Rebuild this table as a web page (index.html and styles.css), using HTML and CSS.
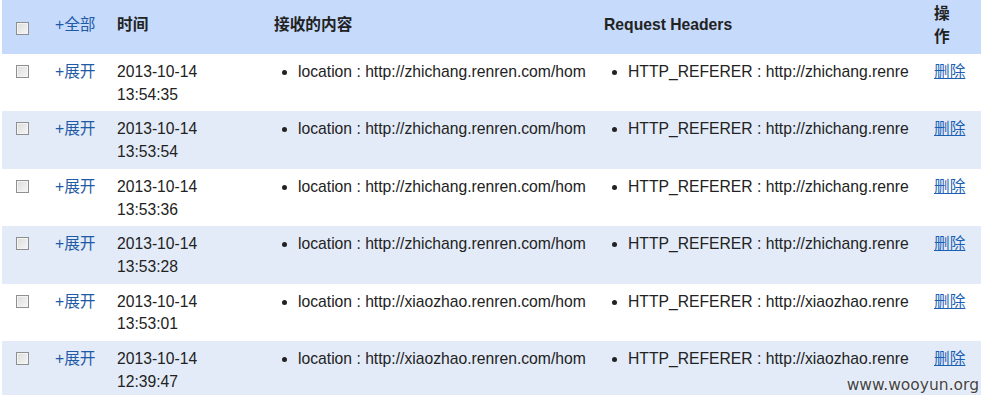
FILE: index.html
```html
<!DOCTYPE html>
<html lang="zh">
<head>
<meta charset="utf-8">
<title>接收的内容</title>
<link rel="stylesheet" href="styles.css">
</head>
<body>
<div class="wrap">
<table class="list">
  <colgroup>
    <col class="c-check"><col class="c-toggle"><col class="c-time"><col class="c-content"><col class="c-headers"><col class="c-op">
  </colgroup>
  <thead>
    <tr>
      <th><input type="checkbox" class="cb"></th>
      <th class="th-link"><a class="toggle">+全部</a></th>
      <th>时间</th>
      <th>接收的内容</th>
      <th>Request Headers</th>
      <th class="th-op">操作</th>
    </tr>
  </thead>
  <tbody>
    <tr>
      <td><input type="checkbox" class="cb"></td>
      <td><a class="toggle">+展开</a></td>
      <td>2013-10-14<br>13:54:35</td>
      <td><ul><li>location : http://zhichang.renren.com/hom</li></ul></td>
      <td><ul><li>HTTP_REFERER : http://zhichang.renre</li></ul></td>
      <td><a class="del" href="#">删除</a></td>
    </tr>
    <tr class="alt">
      <td><input type="checkbox" class="cb"></td>
      <td><a class="toggle">+展开</a></td>
      <td>2013-10-14<br>13:53:54</td>
      <td><ul><li>location : http://zhichang.renren.com/hom</li></ul></td>
      <td><ul><li>HTTP_REFERER : http://zhichang.renre</li></ul></td>
      <td><a class="del" href="#">删除</a></td>
    </tr>
    <tr>
      <td><input type="checkbox" class="cb"></td>
      <td><a class="toggle">+展开</a></td>
      <td>2013-10-14<br>13:53:36</td>
      <td><ul><li>location : http://zhichang.renren.com/hom</li></ul></td>
      <td><ul><li>HTTP_REFERER : http://zhichang.renre</li></ul></td>
      <td><a class="del" href="#">删除</a></td>
    </tr>
    <tr class="alt">
      <td><input type="checkbox" class="cb"></td>
      <td><a class="toggle">+展开</a></td>
      <td>2013-10-14<br>13:53:28</td>
      <td><ul><li>location : http://zhichang.renren.com/hom</li></ul></td>
      <td><ul><li>HTTP_REFERER : http://zhichang.renre</li></ul></td>
      <td><a class="del" href="#">删除</a></td>
    </tr>
    <tr>
      <td><input type="checkbox" class="cb"></td>
      <td><a class="toggle">+展开</a></td>
      <td>2013-10-14<br>13:53:01</td>
      <td><ul><li>location : http://xiaozhao.renren.com/hom</li></ul></td>
      <td><ul><li>HTTP_REFERER : http://xiaozhao.renre</li></ul></td>
      <td><a class="del" href="#">删除</a></td>
    </tr>
    <tr class="alt">
      <td><input type="checkbox" class="cb"></td>
      <td><a class="toggle">+展开</a></td>
      <td>2013-10-14<br>12:39:47</td>
      <td><ul><li>location : http://xiaozhao.renren.com/hom</li></ul></td>
      <td><ul><li>HTTP_REFERER : http://xiaozhao.renre</li></ul></td>
      <td><a class="del" href="#">删除</a></td>
    </tr>
  </tbody>
</table>
<div class="watermark">www.wooyun.org</div>
</div>
</body>
</html>
```
FILE: styles.css
```css
html, body {
  margin: 0;
  padding: 0;
  background: #ffffff;
}
body {
  font-family: Arial, "Liberation Sans", "Noto Sans CJK SC", sans-serif;
  font-size: 15.7px;
  color: #222222;
  overflow: hidden;
}
.wrap {
  position: relative;
  padding-left: 2px;
  width: 979px;
  height: 395px;
  overflow: hidden;
}
.list {
  table-layout: fixed;
  border-collapse: collapse;
  width: 979px;
}
.c-check { width: 46px; }
.c-toggle { width: 62px; }
.c-time { width: 157px; }
.c-content { width: 330px; }
.c-headers { width: 330px; }
.c-op { width: 54px; }

.list thead tr {
  background: #c6dafc;
  height: 54px;
}
.list th {
  padding: 0 0 5px 7px;
  text-align: left;
  vertical-align: middle;
  font-weight: bold;
  line-height: 23px;
  color: #222222;
}
.list th.th-link {
  font-weight: normal;
}
.list th.th-op {
  padding-right: 20px;
}
.list td {
  padding: 7px 0 5px 7px;
  vertical-align: top;
  line-height: 22.7px;
  white-space: nowrap;
  overflow: hidden;
}
.list tbody tr.alt {
  background: #e3ebf8;
}
.list ul {
  margin: 0;
  padding: 0 0 0 24px;
  list-style: disc;
}
.toggle {
  color: #1f5aa6;
  text-decoration: none;
}
.del {
  color: #1a5fb4;
  text-decoration: underline;
}
.cb {
  appearance: none;
  -webkit-appearance: none;
  box-sizing: border-box;
  width: 13px;
  height: 13px;
  margin: 4px 0 0 7px;
  border: 1px solid #8e8f8f;
  background: linear-gradient(135deg, #dcdcdc 0%, #f6f6f6 100%);
  box-shadow: inset 0 0 0 1px #f4f4f4;
  vertical-align: top;
}
.list th .cb {
  margin-top: 6px;
  vertical-align: middle;
}
.watermark {
  position: absolute;
  right: 2px;
  bottom: 1px;
  font-family: "DejaVu Sans", Verdana, sans-serif;
  font-size: 15.5px;
  line-height: 18px;
  color: #444444;
  text-shadow: 0 0 2px #ffffff;
}
```
